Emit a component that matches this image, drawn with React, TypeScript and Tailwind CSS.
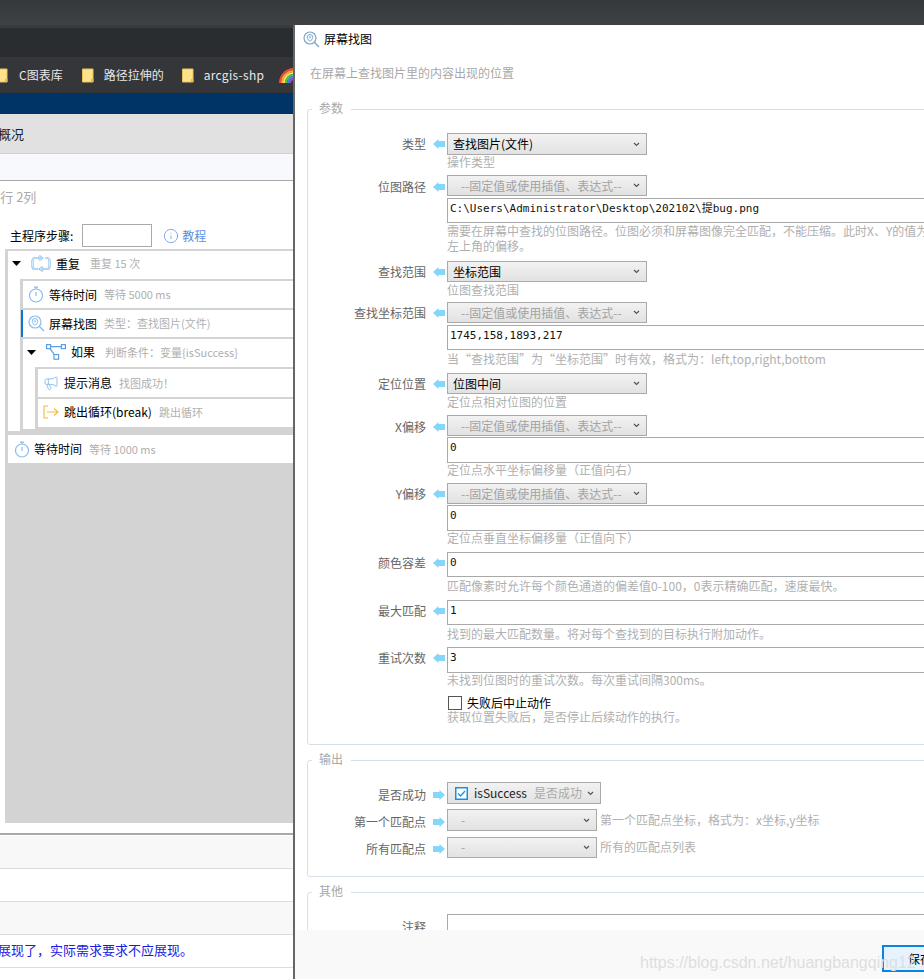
import React from 'react';
import { Info, Megaphone } from 'lucide-react';

const YAHEI = 'font-["Noto_Sans_CJK_SC","Liberation_Sans",sans-serif]';

const Folder: React.FC<{ className?: string }> = ({ className }) => (
  <svg width="12" height="15" viewBox="0 0 12 15" className={className}>
    <path d="M0.5 1 H11 V14 H0.5 Z" fill="#ffe28a" stroke="#e8c35a" />
    <path d="M9 11 L11.5 11 L11.5 14 L9 14 Z" fill="#e6b94a" />
  </svg>
);

const Rainbow: React.FC = () => (
  <svg width="16" height="16" viewBox="0 0 16 16" className="shrink-0">
    <path d="M1 16 A14 14 0 0 1 16 2" fill="none" stroke="#f0483e" strokeWidth="2" />
    <path d="M3 16 A12 12 0 0 1 16 4" fill="none" stroke="#f7a93b" strokeWidth="2" />
    <path d="M5 16 A10 10 0 0 1 16 6" fill="none" stroke="#f5e050" strokeWidth="2" />
    <path d="M7 16 A8 8 0 0 1 16 8" fill="none" stroke="#4fc35a" strokeWidth="2" />
    <path d="M9 16 A6 6 0 0 1 16 10" fill="none" stroke="#3f8fe8" strokeWidth="2" />
    <path d="M11 16 A4 4 0 0 1 16 12" fill="none" stroke="#9a4fd0" strokeWidth="2" />
  </svg>
);

const Timer: React.FC = () => (
  <svg width="16" height="17" viewBox="0 0 16 17" fill="none" stroke="#8cbcec" className="shrink-0">
    <circle cx="8" cy="9.5" r="6.5" strokeWidth="1.2" />
    <path d="M6 1.2 H10 M8 1.2 V3 M8 6 V10" strokeWidth="1.2" />
  </svg>
);

const FindIcon: React.FC<{ color?: string }> = ({ color = '#8cbcec' }) => (
  <svg width="17" height="17" viewBox="0 0 17 17" fill="none" stroke={color} className="shrink-0">
    <circle cx="7" cy="7" r="6" strokeWidth="1.2" />
    <path d="M7 3.5 A2.8 2.8 0 0 1 9.8 6.3 C9.8 8 7 10.5 7 10.5 C7 10.5 4.2 8 4.2 6.3 A2.8 2.8 0 0 1 7 3.5 Z" strokeWidth="1" />
    <circle cx="7" cy="6.3" r="0.8" strokeWidth="0.8" />
    <path d="M11.3 11.3 L16 16" strokeWidth="1.4" />
  </svg>
);

const REPEAT_PATH =
  'M8 3 H4 A2.5 2.5 0 0 0 1.5 5.5 V11.5 A2.5 2.5 0 0 0 4 14 H7 M8 0.8 L11 3 L8 5.2 M12 14 H16 A2.5 2.5 0 0 0 18.5 11.5 V5.5 A2.5 2.5 0 0 0 16 3 H14.5 M12 11.8 L9 14 L12 16.2';

const RepeatIcon: React.FC = () => (
  <svg width="20" height="17" viewBox="0 0 20 17" fill="none" className="shrink-0">
    <path d={REPEAT_PATH} stroke="#8cbcec" strokeWidth="2.2" />
    <path d={REPEAT_PATH} stroke="#fff" strokeWidth="0.7" />
  </svg>
);

const BranchIcon: React.FC = () => (
  <svg width="20" height="16" viewBox="0 0 20 16" fill="none" stroke="#5a9fe6" strokeWidth="1.2" className="shrink-0">
    <rect x="0.6" y="0.6" width="4" height="4" />
    <rect x="15.4" y="0.6" width="4" height="4" />
    <rect x="8" y="10.6" width="4.6" height="4.6" />
    <path d="M4.6 2.6 H15.4 M4 4.6 L8.4 10.6" />
  </svg>
);

const ExitIcon: React.FC = () => (
  <svg width="16" height="14" viewBox="0 0 16 14" fill="none" stroke="#f3bd45" strokeWidth="1.2" className="shrink-0">
    <path d="M5 1 H1 V13 H5" />
    <path d="M4 7 H15 M11 3.5 L15 7 L11 10.5" />
  </svg>
);

const Triangle: React.FC = () => (
  <svg width="9" height="5" viewBox="0 0 9 5" className="shrink-0">
    <path d="M0 0 H9 L4.5 5 Z" fill="#000" />
  </svg>
);

const Arrow: React.FC<{ right?: boolean; className?: string }> = ({ right, className = '' }) => (
  <svg width="12" height="10" viewBox="0 0 12 10" className={`ml-[7px] mr-[2px] shrink-0 ${className}`}>
    {right ? (
      <path d="M0 2 H6.5 V0 L12 5 L6.5 10 V8 H0 Z" fill="#85d6fb" />
    ) : (
      <path d="M12 2 H5.5 V0 L0 5 L5.5 10 V8 H12 Z" fill="#85d6fb" />
    )}
  </svg>
);

const Chevron: React.FC = () => (
  <svg width="7" height="5" viewBox="0 0 7 5" fill="none" stroke="#555" strokeWidth="1.2" className="shrink-0">
    <path d="M1 1 L3.5 3.5 L6 1" />
  </svg>
);

const Select: React.FC<{ text: string; muted?: boolean; className?: string }> = ({ text, muted, className = 'w-[200px] h-[21px]' }) => (
  <div className={`flex items-center justify-between border border-[#a9a9a9] bg-gradient-to-b from-[#f2f2f2] to-[#e2e2e2] shrink-0 pr-[6px] ${className}`}>
    <span className={muted ? 'pl-[13px] text-[#a3a3a3]' : 'pl-[5px] text-black'}>{text}</span>
    <Chevron />
  </div>
);

const Input: React.FC<{ value: string; className?: string }> = ({ value, className = '' }) => (
  <div className={`flex items-center w-[600px] border border-[#a9a9a9] bg-white pl-[2px] pb-[3px] font-["DejaVu_Sans_Mono","Noto_Sans_CJK_SC",monospace] text-[11px] text-[#111] shrink-0 ${className}`}>
    {value}
  </div>
);

const Help: React.FC<{ children: React.ReactNode }> = ({ children }) => (
  <div className="h-[15px] leading-[13px] text-[#b0b0b0] whitespace-nowrap">{children}</div>
);

const Line: React.FC<{ label: string; right?: boolean; shift?: string; className?: string; children: React.ReactNode }> = ({ label, right, shift = '', className, children }) => (
  <div className={`flex items-center ${className ?? ''}`}>
    <div className={`w-[118px] text-right text-[#666] whitespace-nowrap ${shift}`}>{label}</div>
    <Arrow right={right} className={shift} />
    {children}
  </div>
);

const Under: React.FC<{ children: React.ReactNode }> = ({ children }) => (
  <div className="ml-[139px]">{children}</div>
);

const Fixed = () => <Select text="--固定值或使用插值、表达式--" muted />;

const Group: React.FC<{ title: string; className: string; children: React.ReactNode }> = ({ title, className, children }) => (
  <fieldset className={`ml-[12px] w-[700px] border border-[#d7e0e8] rounded-[3px] ${className}`}>
    <legend className="ml-[4px] pl-[7px] pr-[8px] h-[18px] leading-[16px] text-[#a8a8a8]">{title}</legend>
    {children}
  </fieldset>
);

const Tree: React.FC = () => (
  <div className="ml-[5px] h-[574px] bg-[#d3d3d3] pt-[2px] pl-[3px] text-[12px] text-black whitespace-nowrap overflow-hidden">
    <div className="bg-white">
      <div className="h-[28px] flex items-center pl-[4px] pb-[3px]">
        <Triangle />
        <span className="ml-[10px]"><RepeatIcon /></span>
        <span className="ml-[5px]">重复</span>
        <span className="ml-[10px] text-[11px] text-[#b0b0b0]">重复 15 次</span>
      </div>
      <div className="ml-[12px] bg-[#d3d3d3] pl-[3px] py-[2px]">
        <div className="h-[27px] bg-white flex items-center pl-[5px]">
          <Timer />
          <span className="ml-[5px]">等待时间</span>
          <span className="ml-[7px] text-[11px] text-[#b0b0b0]">等待 5000 ms</span>
        </div>
        <div className="-ml-[2px] mt-[2px] h-[27px] bg-white border-l-[2px] border-[#0a78d0] flex items-center pl-[5px]">
          <FindIcon />
          <span className="ml-[4px]">屏幕找图</span>
          <span className="ml-[7px] text-[11px] text-[#b0b0b0]">类型：查找图片(文件)</span>
        </div>
        <div className="mt-[2px] bg-white">
          <div className="h-[28px] flex items-center pl-[4px] pb-[2px]">
            <Triangle />
            <span className="ml-[10px]"><BranchIcon /></span>
            <span className="ml-[5px]">如果</span>
            <span className="ml-[10px] text-[11px] text-[#b0b0b0]">判断条件：变量{'{isSuccess}'}</span>
          </div>
          <div className="ml-[12px] bg-[#d3d3d3] pl-[3px] pt-[2px] pb-[2px]">
            <div className="h-[28px] bg-white flex items-center pl-[5px]">
              <Megaphone size={16} stroke="#8cbcec" strokeWidth={1.4} className="shrink-0" />
              <span className="ml-[5px]">提示消息</span>
              <span className="ml-[7px] text-[11px] text-[#b0b0b0]">找图成功！</span>
            </div>
            <div className="mt-[2px] h-[28px] bg-white flex items-center pl-[5px] pb-[2px]">
              <ExitIcon />
              <span className="ml-[5px]">跳出循环(break)</span>
              <span className="ml-[7px] text-[11px] text-[#b0b0b0]">跳出循环</span>
            </div>
          </div>
        </div>
      </div>
    </div>
    <div className="mt-[4px] h-[28px] bg-white flex items-center pl-[6px]">
      <Timer />
      <span className="ml-[4px]">等待时间</span>
      <span className="ml-[7px] text-[11px] text-[#b0b0b0]">等待 1000 ms</span>
    </div>
  </div>
);

const App: React.FC = () => {
  return (
    <div className={`relative w-[924px] h-[979px] overflow-hidden bg-white text-[12px] ${YAHEI}`}>
      <div className="h-[25px] bg-gradient-to-b from-[#35383b] to-[#3e4245]" />
      <div className="flex h-[954px]">
        {/* left: page behind the dialog */}
        <div className="w-[295px] shrink-0 border-r-2 border-[#666] overflow-hidden">
          <div className="h-[3px] bg-[#383b3e]" />
          <div className="h-[29px] bg-[#2a2d2f]" />
          <div className="h-[36px] bg-[#35363a] flex items-center text-[#e8e8e8] whitespace-nowrap">
            <Folder className="-ml-[4px] shrink-0" />
            <span className="ml-[11px]">C图表库</span>
            <Folder className="ml-[19px] shrink-0" />
            <span className="ml-[10px]">路径拉伸的</span>
            <Folder className="ml-[18px] shrink-0" />
            <span className="ml-[10px] tracking-[0.3px]">arcgis-shp</span>
            <span className="ml-[15px]"><Rainbow /></span>
          </div>
          <div className="h-[21px] bg-[#003366]" />
          <div className="h-[40px] bg-[#e1e1e1] border-b border-[#d2d2d2] flex items-center text-[13px] text-[#123] whitespace-nowrap">
            <span className="-ml-[2px]">概况</span>
          </div>
          <div className="h-[27px] bg-[#f8f9fd] border-b border-[#a8a8a8]" />
          <div className="h-[68px] relative">
            <div className="h-[31px] flex items-center text-[13px] text-[#aaa] -ml-[7px] whitespace-nowrap">4行 2列</div>
            <div className="flex items-center mt-[12px] text-black">
              <span className="ml-[10px]">主程序步骤:</span>
              <div className="ml-[9px] w-[70px] h-[23px] border border-[#a9a9a9] bg-white" />
              <Info size={16} stroke="#6f9fe8" strokeWidth={1.3} className="ml-[11px]" />
              <span className="ml-[3px] text-[#5b8fe0]">教程</span>
            </div>
          </div>
          <Tree />
          <div className="h-[10px]" />
          <div className="h-[2px] bg-[#a8a8a8]" />
          <div className="h-[33px] bg-[#f8f8f8] border-t border-white" />
          <div className="h-[33px] bg-white border-t border-[#dcdcdc]" />
          <div className="h-[33px] bg-[#f8f8f8] border-t border-[#dcdcdc]" />
          <div className="h-[33px] bg-white border-t border-[#dcdcdc] flex items-center text-[13px] text-[#1a1ae0] whitespace-nowrap -ml-[2px] pb-[2px]">
            展现了，实际需求要求不应展现。
          </div>
          <div className="border-t border-[#dcdcdc]" />
        </div>

        {/* right: dialog */}
        <div className="flex-1 min-w-0 flex flex-col overflow-hidden">
          <div className="flex-1 min-h-0 overflow-hidden">
            <div className="h-[28px] flex items-center pl-[8px] text-black">
              <FindIcon color="#7ba6c8" />
              <span className="ml-[4px]">屏幕找图</span>
            </div>
            <div className="mt-[10px] h-[20px] leading-[20px] pl-[15px] text-[#a8a8a8]">在屏幕上查找图片里的内容出现的位置</div>

            <Group title="参数" className="mt-[17px] pb-[19px]">
              <Line label="类型" className="mt-[15px]"><Select text="查找图片(文件)" className="w-[200px] h-[22px]" /></Line>
              <Under><Help>操作类型</Help></Under>

              <Line label="位图路径" shift="mt-[2px]" className="mt-[5px]"><Fixed /></Line>
              <Under>
                <Input value="C:\Users\Administrator\Desktop\202102\提bug.png" className="mt-[2px] h-[25px]" />
                <div className="mt-[1px]">
                  <Help>需要在屏幕中查找的位图路径。位图必须和屏幕图像完全匹配，不能压缩。此时X、Y的值为相对</Help>
                  <Help>左上角的偏移。</Help>
                </div>
              </Under>

              <Line label="查找范围" className="mt-[7px]"><Select text="坐标范围" /></Line>
              <Under><div className="mt-[1px]"><Help>位图查找范围</Help></div></Under>

              <Line label="查找坐标范围" className="mt-[4px]"><Fixed /></Line>
              <Under>
                <Input value="1745,158,1893,217" className="mt-[2px] h-[25px]" />
                <div className="mt-[2px]"><Help>当“查找范围”为“坐标范围”时有效，格式为：left,top,right,bottom</Help></div>
              </Under>

              <Line label="定位位置" className="mt-[6px]"><Select text="位图中间" /></Line>
              <Under><div className="mt-[1px]"><Help>定位点相对位图的位置</Help></div></Under>

              <Line label="X偏移" shift="mt-[2px]" className="mt-[5px]"><Fixed /></Line>
              <Under>
                <Input value="0" className="mt-[1px] h-[26px]" />
                <Help>定位点水平坐标偏移量（正值向右）</Help>
              </Under>

              <Line label="Y偏移" className="mt-[5px]"><Fixed /></Line>
              <Under>
                <Input value="0" className="mt-[1px] h-[26px]" />
                <Help>定位点垂直坐标偏移量（正值向下）</Help>
              </Under>

              <Line label="颜色容差" shift="mb-[4px]" className="mt-[6px]"><Input value="0" className="h-[25px]" /></Line>
              <Under><div className="mt-[2px]"><Help>匹配像素时允许每个颜色通道的偏差值0-100，0表示精确匹配，速度最快。</Help></div></Under>

              <Line label="最大匹配" shift="mb-[4px]" className="mt-[6px]"><Input value="1" className="h-[25px]" /></Line>
              <Under><div className="mt-[2px]"><Help>找到的最大匹配数量。将对每个查找到的目标执行附加动作。</Help></div></Under>

              <Line label="重试次数" shift="mb-[4px]" className="mt-[5px]"><Input value="3" className="h-[26px]" /></Line>
              <Under>
                <Help>未找到位图时的重试次数。每次重试间隔300ms。</Help>
                <div className="mt-[7px] h-[15px] flex items-center text-black">
                  <div className="ml-[1px] w-[14px] h-[14px] border border-[#555] bg-white" />
                  <span className="ml-[5px]">失败后中止动作</span>
                </div>
                <Help>获取位置失败后，是否停止后续动作的执行。</Help>
              </Under>
            </Group>

            <Group title="输出" className="mt-[6px] pb-[18px]">
              <Line label="是否成功" right shift="mt-[4px]" className="mt-[13px]">
                <div className="w-[154px] h-[22px] flex items-center border border-[#a9a9a9] bg-gradient-to-b from-[#f2f2f2] to-[#e2e2e2] pl-[7px] pr-[6px]">
                  <svg width="13" height="13" viewBox="0 0 13 13" fill="none" className="shrink-0">
                    <rect x="0.75" y="0.75" width="11.5" height="11.5" fill="#fff" stroke="#1a8fe0" strokeWidth="1.5" />
                    <path d="M3 6.5 L5.5 9 L10 4" stroke="#1a8fe0" strokeWidth="1.3" />
                  </svg>
                  <span className="ml-[6px] text-[#222]">isSuccess</span>
                  <span className="ml-[7px] text-[#aaa]">是否成功</span>
                  <span className="ml-auto"><Chevron /></span>
                </div>
              </Line>
              <Line label="第一个匹配点" right shift="mt-[4px]" className="mt-[5px]">
                <Select text="-" muted className="w-[150px] h-[22px]" />
                <span className="ml-[3px] text-[#b0b0b0] whitespace-nowrap">第一个匹配点坐标，格式为：x坐标,y坐标</span>
              </Line>
              <Line label="所有匹配点" right shift="mt-[4px]" className="mt-[5px]">
                <Select text="-" muted className="w-[150px] h-[21px]" />
                <span className="ml-[3px] text-[#b0b0b0] whitespace-nowrap">所有的匹配点列表</span>
              </Line>
            </Group>

            <Group title="其他" className="mt-[6px] h-[100px]">
              <div className="flex mt-[13px]">
                <div className="w-[118px] mt-[4px] text-right text-[#666]">注释</div>
                <div className="ml-[21px] w-[600px] h-[60px] border border-[#a9a9a9] bg-white" />
              </div>
            </Group>
          </div>

          <div className="h-[49px] shrink-0 bg-[#f9f9f9] pt-[15px] pl-[587px]">
            <div className="w-[60px] h-[27px] border-2 border-[#0a84e0] bg-[#e6f3fe] flex items-center pl-[24px] text-black whitespace-nowrap">保存</div>
          </div>
        </div>
      </div>

      <div className='absolute left-[640px] top-[951px] font-["Liberation_Sans",sans-serif] text-[16px] text-[#dedede] whitespace-nowrap pointer-events-none'>
        https://blog.csdn.net/huangbangqing12
      </div>
    </div>
  );
};

export default App;
